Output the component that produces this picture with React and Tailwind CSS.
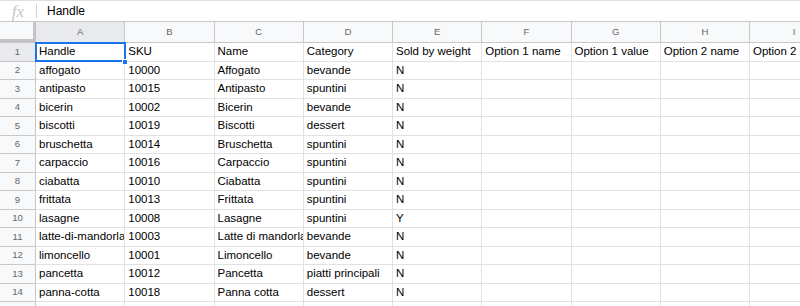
const COLS = ["A", "B", "C", "D", "E", "F", "G", "H", "I"];

const ROWS = [
  ["Handle", "SKU", "Name", "Category", "Sold by weight", "Option 1 name", "Option 1 value", "Option 2 name", "Option 2 name"],
  ["affogato", "10000", "Affogato", "bevande", "N"],
  ["antipasto", "10015", "Antipasto", "spuntini", "N"],
  ["bicerin", "10002", "Bicerin", "bevande", "N"],
  ["biscotti", "10019", "Biscotti", "dessert", "N"],
  ["bruschetta", "10014", "Bruschetta", "spuntini", "N"],
  ["carpaccio", "10016", "Carpaccio", "spuntini", "N"],
  ["ciabatta", "10010", "Ciabatta", "spuntini", "N"],
  ["frittata", "10013", "Frittata", "spuntini", "N"],
  ["lasagne", "10008", "Lasagne", "spuntini", "Y"],
  ["latte-di-mandorla", "10003", "Latte di mandorla", "bevande", "N"],
  ["limoncello", "10001", "Limoncello", "bevande", "N"],
  ["pancetta", "10012", "Pancetta", "piatti principali", "N"],
  ["panna-cotta", "10018", "Panna cotta", "dessert", "N"],
  [],
];

function FormulaBar() {
  return (
    <div className="flex items-center h-[22px] border-t border-t-[#e0e0e0] border-b border-b-[#c8c8c8] bg-white">
      <div className="w-[36px] flex items-center justify-center">
        <span className="text-[17px] italic text-[#c6c6c6] font-['Liberation_Serif',serif] leading-none">fx</span>
      </div>
      <div className="w-px h-[14px] bg-[#d0d0d0]" />
      <span className="pl-[10px] text-[12px] text-black font-['Liberation_Sans',Arial,sans-serif]">Handle</span>
    </div>
  );
}

function HeaderRow() {
  return (
    <div className="flex h-[21px] bg-[#f8f9fa]">
      <div className="w-[36px] shrink-0 border-r-[3px] border-r-[#c4c4c4] border-b-[4px] border-b-[#c4c4c4] bg-[#f8f9fa]" />
      {COLS.map((c, i) => (
        <div
          key={c}
          className={`w-[89.25px] shrink-0 flex items-center justify-center text-[9.5px] text-[#666] border-r border-r-[#c8c8c8] border-b border-b-[#c8c8c8] ${i === 0 ? "bg-[#e8eaed]" : ""}`}
        >
          {c}
        </div>
      ))}
    </div>
  );
}

function Row({ n, cells }) {
  return (
    <div className="flex h-[18.5px]">
      <div
        className={`w-[36px] shrink-0 flex items-center justify-center text-[9.5px] text-[#666] border-r border-r-[#c8c8c8] border-b border-b-[#c8c8c8] ${n === 1 ? "bg-[#e8eaed]" : "bg-[#f8f9fa]"}`}
      >
        {n}
      </div>
      {COLS.map((c, i) => (
        <div
          key={c}
          className="w-[89.25px] shrink-0 border-r border-r-[#e2e2e2] border-b border-b-[#e2e2e2] overflow-hidden whitespace-nowrap pl-[3px] flex items-center text-[11.5px] text-black"
        >
          {cells[i] || ""}
        </div>
      ))}
    </div>
  );
}

export default function App() {
  return (
    <div className="w-[800px] h-[306px] overflow-hidden bg-white font-['Liberation_Sans',Arial,sans-serif]">
      <FormulaBar />
      <div className="relative">
        <HeaderRow />
        {ROWS.map((cells, i) => (
          <Row key={i} n={i + 1} cells={cells} />
        ))}
        {/* selected cell A1 */}
        <div className="absolute left-[35px] top-[20px] w-[91px] h-[20px] border-2 border-[#1a73e8] pointer-events-none" />
        <div className="absolute left-[122px] top-[37px] w-[6px] h-[6px] bg-[#1a73e8] border border-white" />
      </div>
    </div>
  );
}
